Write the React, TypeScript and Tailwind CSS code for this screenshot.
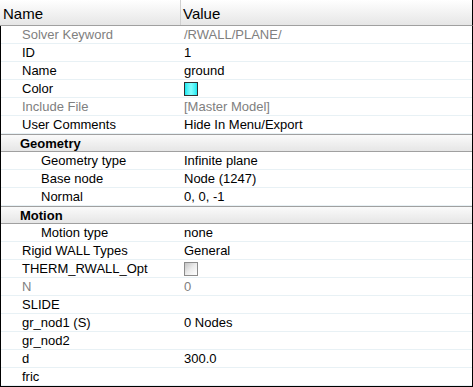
type Row =
  | { kind: 'group'; label: string }
  | {
      kind: 'row';
      label: string;
      value?: string;
      indent?: boolean;
      muted?: boolean;
      swatch?: boolean;
      checkbox?: boolean;
    };

const rows: Row[] = [
  { kind: 'row', label: 'Solver Keyword', value: '/RWALL/PLANE/', muted: true },
  { kind: 'row', label: 'ID', value: '1' },
  { kind: 'row', label: 'Name', value: 'ground' },
  { kind: 'row', label: 'Color', swatch: true },
  { kind: 'row', label: 'Include File', value: '[Master Model]', muted: true },
  { kind: 'row', label: 'User Comments', value: 'Hide In Menu/Export' },
  { kind: 'group', label: 'Geometry' },
  { kind: 'row', label: 'Geometry type', value: 'Infinite plane', indent: true },
  { kind: 'row', label: 'Base node', value: 'Node (1247)', indent: true },
  { kind: 'row', label: 'Normal', value: '0, 0, -1', indent: true },
  { kind: 'group', label: 'Motion' },
  { kind: 'row', label: 'Motion type', value: 'none', indent: true },
  { kind: 'row', label: 'Rigid WALL Types', value: 'General' },
  { kind: 'row', label: 'THERM_RWALL_Opt', checkbox: true },
  { kind: 'row', label: 'N', value: '0', muted: true },
  { kind: 'row', label: 'SLIDE' },
  { kind: 'row', label: 'gr_nod1 (S)', value: '0 Nodes' },
  { kind: 'row', label: 'gr_nod2' },
  { kind: 'row', label: 'd', value: '300.0' },
  { kind: 'row', label: 'fric' },
];

export default function App() {
  return (
    <div
      className="w-[473px] h-[387px] bg-white text-[13px] text-black overflow-hidden"
      style={{ fontFamily: '"Liberation Sans", Arial, sans-serif' }}
    >
      {/* Header */}
      <div className="flex h-[26px] border-b border-r border-b-[#a0a0a0] border-r-black bg-gradient-to-b from-white to-[#e6e6e6] text-[15px]">
        <div className="w-[181px] pl-[3px] pt-[3px] flex items-center border-r border-[#d0d0d0]">Name</div>
        <div className="flex-1 pl-[2px] pt-[3px] flex items-center">Value</div>
      </div>

      {/* Body */}
      <div className="h-[361px] border-l border-r border-b border-black">
        {rows.map((r, i) =>
          r.kind === 'group' ? (
            <div
              key={i}
              className="h-[18px] flex items-center pt-[1px] border-t border-b border-[#a0a0a0] bg-gradient-to-b from-[#fafafa] to-[#e6e6e6] pl-[19px] font-bold"
            >
              {r.label}
            </div>
          ) : (
            <div key={i} className="h-[18px] flex pt-[1px] border-b border-[#e8f1f5]">
              <div
                className={`w-[180px] flex items-center ${r.indent ? 'pl-[40px]' : 'pl-[21px]'} ${
                  r.muted ? 'text-[#808080]' : ''
                }`}
              >
                {r.label}
              </div>
              <div className={`flex-1 flex items-center pl-[3px] ${r.muted ? 'text-[#808080]' : ''}`}>
                {r.swatch && (
                  <span className="w-[14px] h-[14px] border border-[#303030] bg-gradient-to-r from-[#00e8f0] via-[#80ffff] to-[#00e8f0]" />
                )}
                {r.checkbox && (
                  <span className="w-[14px] h-[14px] border border-[#8c8c8c] bg-gradient-to-br from-[#c4c4c4] via-[#ececec] to-white" />
                )}
                {r.value}
              </div>
            </div>
          )
        )}
      </div>
    </div>
  );
}
